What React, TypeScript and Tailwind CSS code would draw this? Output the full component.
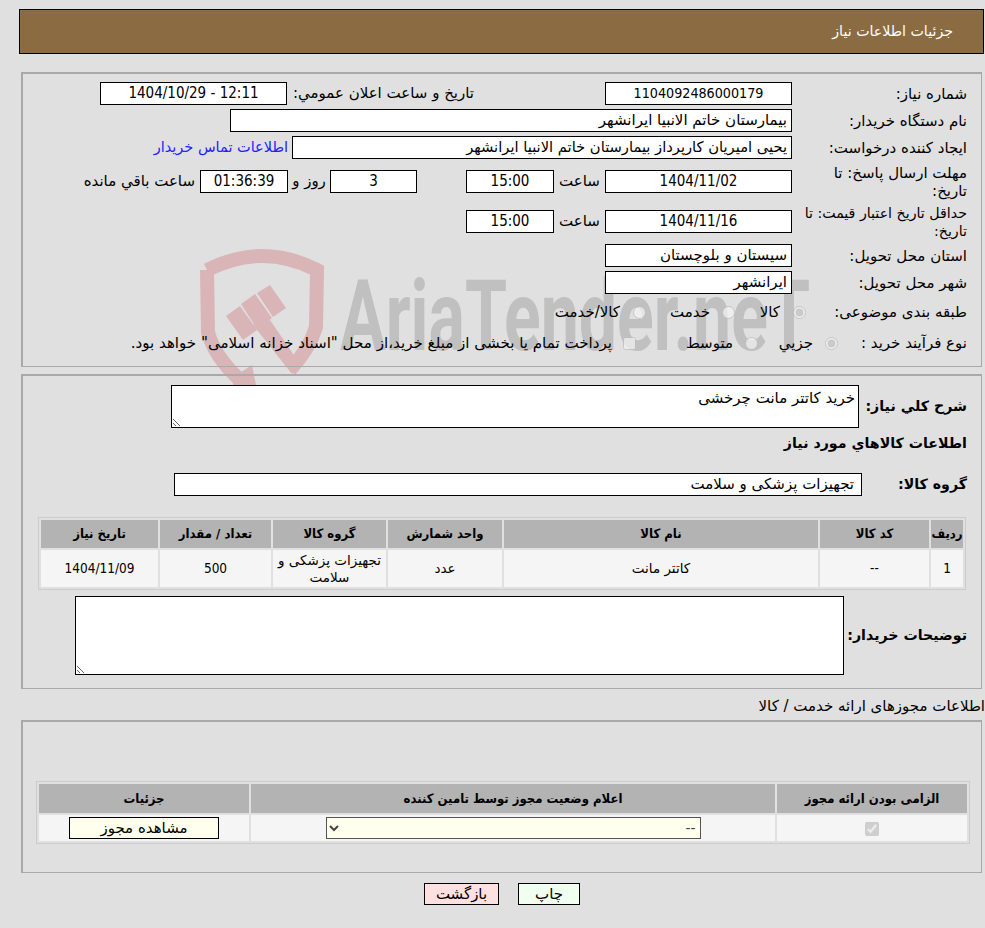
import React from "react";

const box = "h-[23px] bg-white border border-black flex items-center px-[4px] leading-none shrink-0";
const num = "text-[15px] [font-stretch:condensed]";

function Row({ label, className, labelClass, children }: { label: string; className?: string; labelClass?: string; children?: React.ReactNode }) {
  return (
    <div className={"flex items-center " + (className || "")}>
      <div className={"shrink-0 mr-[14px] leading-[18px] " + (labelClass || "w-[161px] ml-[14px] text-[15px]")}>{label}</div>
      {children}
    </div>
  );
}

function Field({ className, children }: { className?: string; children?: React.ReactNode }) {
  return <div className={box + " " + (className || "")}>{children}</div>;
}

function Watermark() {
  return (
    <svg className="absolute left-[190px] top-[240px] w-[630px] h-[160px] z-0" viewBox="0 0 630 160">
      <path d="M17 30 Q45 16 72 16 Q100 16 127 30 L126 87 Q120 108 100 130 M17 30 L18 92 Q24 116 50 140" fill="none" stroke="#d9b5b8" strokeWidth="14" />
      <path d="M36 76 L50 66 L67 90 L53 100 Z M51 64 L65 54 L82 78 L67 89 Z M67 53 L80 45 L96 68 L83 77 Z" fill="#d9b5b8" />
      <path d="M63 85 L80 80 L110 124 L102 134 Z M42 138 L62 125 L67 150 L44 150 Z" fill="#d9b5b8" />
      <text direction="ltr" x="150" y="110" textLength="470" lengthAdjust="spacingAndGlyphs" fontSize="98" fontWeight="700" fill="#c0c0c0" fontFamily="Roboto, sans-serif">
        AriaTender.neT
      </text>
    </svg>
  );
}

const th = "bg-[#b3b3b3] font-bold text-[13px] [font-stretch:condensed] h-[28px] text-center p-0";
const td = "bg-[#f5f5f5] text-[13.5px] text-center p-0 leading-[17px]";
const tdNum = "bg-[#f5f5f5] text-[13.5px] [font-stretch:condensed] text-center p-0";
const boldLabel = "shrink-0 font-bold text-[14.2px]";
const radio = "w-[13px] h-[13px] m-0 shrink-0";

export default function App() {
  return (
    <div dir="rtl" className="relative min-h-[928px] bg-[#e0e0e0] text-black overflow-hidden pt-[9px] font-['DejaVu_Sans',sans-serif]">
      <Watermark />

      {/* Header */}
      <div className="relative ml-[19px] mr-[1px] h-[45px] bg-[#8b6b41] border border-black flex items-center pr-[30px] text-white text-[14.2px]">
        جزئیات اطلاعات نیاز
      </div>

      {/* Main info */}
      <div className="relative mt-[18px] ml-[21px] mr-[3px] h-[295px] border-2 border-[#a9a9a9] border-b border-r pt-[8px]">
        <Row label="شماره نیاز:" className="h-[23px]">
          <Field className="w-[187px] justify-center text-[14.2px] [font-stretch:condensed]">1104092486000179</Field>
          <div className="w-[131px] shrink-0" />
          <div className="w-[187px] text-[15px] shrink-0">تاریخ و ساعت اعلان عمومي:</div>
          <Field className={"w-[187px] justify-center " + num}>12:11 - 1404/10/29</Field>
        </Row>
        <Row label="نام دستگاه خریدار:" className="h-[23px] mt-[4px]">
          <Field className="w-[562px] text-[15px]">بیمارستان خاتم الانبیا ایرانشهر</Field>
        </Row>
        <Row label="ایجاد کننده درخواست:" className="h-[23px] mt-[4px]">
          <Field className="w-[500px] text-[14.7px]">یحیی امیریان کارپرداز بیمارستان خاتم الانبیا ایرانشهر</Field>
          <a className="mr-[4px] text-[14.5px] text-[#2020ff]">اطلاعات تماس خریدار</a>
        </Row>
        <Row label="مهلت ارسال پاسخ: تا تاریخ:" className="h-[37px] mt-[4px]">
          <Field className={"w-[187px] h-[22px] justify-center " + num}>1404/11/02</Field>
          <div className="w-[51px] text-center text-[15px] shrink-0">ساعت</div>
          <Field className={"w-[88px] h-[22px] justify-center " + num}>15:00</Field>
          <div className="w-[49px] shrink-0" />
          <Field className={"w-[87px] h-[22px] justify-center " + num}>3</Field>
          <div className="w-[42px] text-center text-[15px] shrink-0">روز و</div>
          <Field className={"w-[88px] h-[22px] justify-center bg-[#ffffee] " + num}>01:36:39</Field>
          <div className="mr-[5px] text-[15px]">ساعت باقي مانده</div>
        </Row>
        <Row label="حداقل تاریخ اعتبار قیمت: تا تاریخ:" labelClass="w-[171px] ml-[4px] text-[14.2px]" className="h-[37px] mt-[3px]">
          <Field className={"w-[187px] justify-center " + num}>1404/11/16</Field>
          <div className="w-[51px] text-center text-[15px] shrink-0">ساعت</div>
          <Field className={"w-[88px] justify-center " + num}>15:00</Field>
        </Row>
        <Row label="استان محل تحویل:" className="h-[23px] mt-[4px]">
          <Field className="w-[187px] text-[15px]">سیستان و بلوچستان</Field>
        </Row>
        <Row label="شهر محل تحویل:" className="h-[23px] mt-[4px]">
          <Field className="w-[187px] text-[15px]">ایرانشهر</Field>
        </Row>
        <Row label="طبقه بندی موضوعی:" className="h-[20px] mt-[8px] text-[15px]">
          <input type="radio" disabled defaultChecked className={radio + " -mr-[14px]"} />
          <span className="mr-[13px] w-[45px] shrink-0">کالا</span>
          <input type="radio" disabled className={radio} />
          <span className="mr-[12px] w-[64px] shrink-0">خدمت</span>
          <input type="radio" disabled className={radio} />
          <span className="mr-[13px]">کالا/خدمت</span>
        </Row>
        <Row label="نوع فرآیند خرید :" className="h-[20px] mt-[11px] text-[15px]">
          <input type="radio" disabled defaultChecked className={radio + " -mr-[46px]"} />
          <span className="mr-[12px] w-[55px] shrink-0">جزیي</span>
          <input type="radio" disabled className={radio} />
          <span className="mr-[12px] w-[97px] shrink-0">متوسط</span>
          <input type="checkbox" disabled className={radio} />
          <span className="mr-[11px] whitespace-nowrap text-[15.1px]">پرداخت تمام یا بخشی از مبلغ خرید،از محل "اسناد خزانه اسلامی" خواهد بود.</span>
        </Row>
      </div>

      {/* Description and items */}
      <div className="relative mt-[7px] ml-[21px] mr-[3px] h-[315px] border-2 border-[#a9a9a9] border-b border-r pt-[9px]">
        <div className="flex items-center h-[43px]">
          <div className={boldLabel + " w-[108px] mr-[14px]"}>شرح کلي نیاز:</div>
          <textarea
            readOnly
            dir="rtl"
            className="w-[688px] h-[43px] bg-white border border-black text-[15px] leading-[17px] px-[3px] py-[4px] outline-none"
            defaultValue="خرید کاتتر مانت چرخشی"
          />
        </div>
        <div className={boldLabel + " mr-[14px] mt-[6px] leading-[18px]"}>اطلاعات کالاهاي مورد نیاز</div>
        <div className="flex items-center h-[23px] mt-[21px]">
          <div className={boldLabel + " w-[105px] mr-[14px]"}>گروه کالا:</div>
          <Field className="w-[688px] pr-[7px] text-[15px]">تجهیزات پزشکی و سلامت</Field>
        </div>
        <table className="mt-[21px] mr-[15px] w-[928px] border border-[#cccccc] border-separate border-spacing-[2px] table-fixed">
          <colgroup>
            <col className="w-[32px]" />
            <col className="w-[109px]" />
            <col className="w-[314px]" />
            <col className="w-[114px]" />
            <col className="w-[113px]" />
            <col className="w-[111px]" />
            <col />
          </colgroup>
          <thead>
            <tr>
              <th className={th}>ردیف</th>
              <th className={th}>کد کالا</th>
              <th className={th}>نام کالا</th>
              <th className={th}>واحد شمارش</th>
              <th className={th}>گروه کالا</th>
              <th className={th}>تعداد / مقدار</th>
              <th className={th}>تاریخ نیاز</th>
            </tr>
          </thead>
          <tbody>
            <tr className="h-[37px]">
              <td className={tdNum}>1</td>
              <td className={tdNum}>--</td>
              <td className={td}>کاتتر مانت</td>
              <td className={td}>عدد</td>
              <td className={td}>تجهیزات پزشکی و سلامت</td>
              <td className={tdNum}>500</td>
              <td className={tdNum}>1404/11/09</td>
            </tr>
          </tbody>
        </table>
        <div className="flex items-center h-[79px] mt-[6px]">
          <div className={boldLabel + " w-[123px] mr-[14px]"}>توضیحات خریدار:</div>
          <textarea readOnly dir="rtl" className="w-[769px] h-[79px] bg-white border border-black outline-none" />
        </div>
      </div>

      {/* Licences */}
      <div className="relative mt-[8px] h-[18px] text-[15px] leading-[18px] whitespace-nowrap">اطلاعات مجوزهای ارائه خدمت / کالا</div>

      <div className="relative mt-[5px] ml-[21px] mr-[3px] h-[153px] border-2 border-[#a9a9a9] border-b border-r pt-[59px]">
        <table className="mr-[11px] w-[934px] border border-[#cccccc] border-separate border-spacing-[2px] table-fixed">
          <colgroup>
            <col className="w-[190px]" />
            <col className="w-[524px]" />
            <col />
          </colgroup>
          <thead>
            <tr>
              <th className={th + " h-[29px]"}>الزامی بودن ارائه مجوز</th>
              <th className={th + " h-[29px]"}>اعلام وضعیت مجوز توسط تامین کننده</th>
              <th className={th + " h-[29px]"}>جزئیات</th>
            </tr>
          </thead>
          <tbody>
            <tr className="h-[26px]">
              <td className={td}>
                <input type="checkbox" disabled defaultChecked className="align-middle w-[14px] h-[14px]" />
              </td>
              <td className={td}>
                <select disabled className="w-[375px] h-[22px] bg-[#ffffee] border border-[#555555] text-[#444444] opacity-100 text-[14px] align-middle" defaultValue="--">
                  <option>--</option>
                </select>
              </td>
              <td className={td}>
                <button className="w-[150px] h-[22px] bg-[#ffffee] border border-black text-[15px] leading-none align-middle">مشاهده مجوز</button>
              </td>
            </tr>
          </tbody>
        </table>
      </div>

      <div className="relative mt-[10px] flex justify-center gap-[19px] pl-[19px]">
        <button className="w-[62px] h-[22px] bg-[#f0fff0] border border-black text-[15px] leading-none">چاپ</button>
        <button className="w-[75px] h-[22px] bg-[#ffe0e0] border border-black text-[15px] leading-none">بازگشت</button>
      </div>
    </div>
  );
}
